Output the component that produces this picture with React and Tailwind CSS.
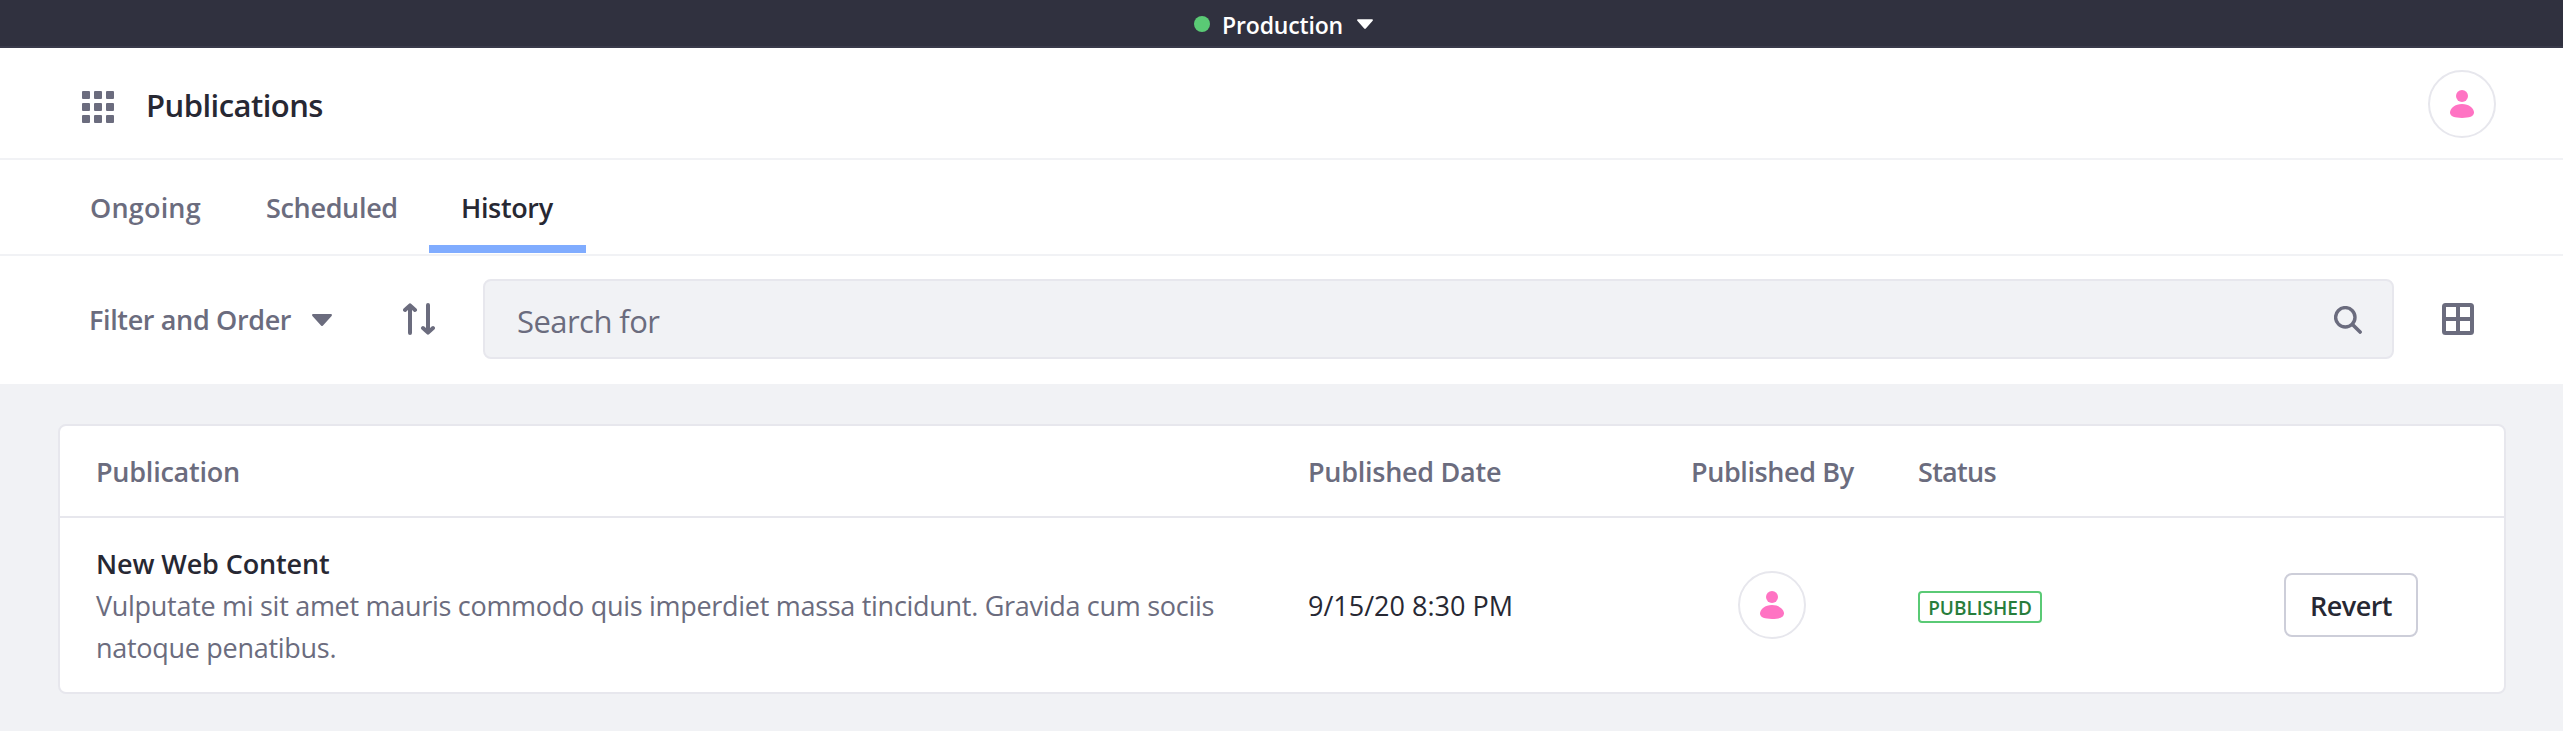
import React from 'react';

function Caret({ className }) {
  return (
    <svg viewBox="0 0 20 12" className={className} fill="currentColor" aria-hidden="true">
      <path d="M1.2 0h17.6c1 0 1.5 1.1.8 1.9L11 11.5a1.3 1.3 0 0 1-2 0L.4 1.9C-.3 1.1.2 0 1.2 0z" />
    </svg>
  );
}

function AppsIcon({ className }) {
  const steps = [0, 12, 24];
  return (
    <svg viewBox="0 0 32 32" className={className} fill="currentColor" aria-hidden="true">
      {steps.map((y) => steps.map((x) => <rect key={`${x}-${y}`} x={x} y={y} width="8" height="8" rx="1" />))}
    </svg>
  );
}

function SortIcon({ className }) {
  return (
    <svg
      viewBox="0 0 32 32"
      className={className}
      fill="none"
      stroke="currentColor"
      strokeWidth="4"
      strokeLinecap="round"
      strokeLinejoin="round"
      aria-hidden="true"
    >
      <path d="M7 30V3M2 7l5-4.6L12 7" />
      <path d="M25 2v27M20 25l5 4.6L30 25" />
    </svg>
  );
}

function SearchIcon({ className }) {
  return (
    <svg viewBox="0 0 28 28" className={className} fill="none" stroke="currentColor" aria-hidden="true">
      <circle cx="11.3" cy="11.3" r="9.7" strokeWidth="3.4" />
      <path d="M18.5 18.5l7.6 7.6" strokeWidth="3.6" strokeLinecap="round" />
    </svg>
  );
}

function TableIcon({ className }) {
  return (
    <svg viewBox="0 0 32 32" className={className} fill="none" stroke="currentColor" strokeWidth="4" aria-hidden="true">
      <rect x="2" y="2" width="28" height="28" rx="1.5" />
      <path d="M16 2v28M2 16h28" />
    </svg>
  );
}

function Avatar({ className = '' }) {
  return (
    <span
      className={`flex size-[68px] shrink-0 items-center justify-center rounded-full border-2 border-[#e7e7ed] bg-white text-[#ff73c3] ${className}`}
    >
      <svg viewBox="0 0 24 28" className="h-7 w-6" fill="currentColor" aria-hidden="true">
        <circle cx="12" cy="6" r="6" />
        <path d="M12 14c7 0 12 4.2 12 8.6C24 26.4 19.2 28 12 28S0 26.4 0 22.6C0 18.2 5 14 12 14z" />
      </svg>
    </span>
  );
}

const columns = 'grid grid-cols-[1212px_383px_227px_366px_134px] items-center pl-9';

export default function App() {
  return (
    <div className="flex min-h-[731px] w-[2563px] flex-col bg-[#f1f2f5] font-['Open_Sans','Noto_Sans',sans-serif] text-[27px] leading-[42px] text-[#272833]">
      <div className="flex h-12 items-center border-b-2 border-[#393a4a] bg-[#30313f] pt-0.5 pl-[1194px] text-white">
        <span className="size-4 rounded-full bg-[#5aca75]" />
        <span className="ml-3 w-[121px] pt-0.5 text-[23px] leading-[34px] font-semibold tracking-[-0.16px]">Production</span>
        <Caret className="ml-[14px] h-[10px] w-4" />
      </div>

      <header className="flex h-28 items-center border-b-2 border-[#f1f2f5] bg-white pr-[67px] pl-[82px]">
        <AppsIcon className="mt-2 size-8 text-[#6b6c7e]" />
        <h1 className="ml-8 pt-1 text-[31px] font-semibold tracking-[-0.54px]">Publications</h1>
        <Avatar className="mt-0.5 ml-auto" />
      </header>

      <nav className="flex h-24 items-start border-b-2 border-[#f1f2f5] bg-white pl-[58px] font-semibold text-[#6b6c7e]">
        <a className="flex h-[93px] w-44 items-center pt-0.5 pl-8 tracking-[0.2px]">Ongoing</a>
        <a className="flex h-[93px] w-[195px] items-center pt-0.5 pl-8 tracking-[-0.33px]">Scheduled</a>
        <a className="flex h-[93px] w-[157px] items-center border-b-8 border-[#80acff] pt-2.5 pl-8 tracking-[-0.35px] text-[#272833]">
          History
        </a>
      </nav>

      <div className="flex h-32 bg-white pt-[23px] pb-[25px] pl-[89px] text-[#6b6c7e]">
        <div className="flex flex-1 items-center">
          <span className="w-[202px] pt-0.5 font-semibold tracking-[-0.36px] whitespace-nowrap">Filter and Order</span>
          <Caret className="mt-0.5 ml-[21px] h-3 w-5" />
          <SortIcon className="ml-[71px] size-8" />
          <div className="ml-12 flex h-20 w-[1911px] items-center rounded-lg border-2 border-[#e7e7ed] bg-[#f1f2f5] pr-[30px] pl-8">
            <span className="pt-1 text-[31px] tracking-[-0.55px]">Search for</span>
            <SearchIcon className="mt-0.5 ml-auto size-7" />
          </div>
          <TableIcon className="ml-12 size-8" />
        </div>
      </div>

      <main className="mt-10 mr-[57px] ml-[58px] rounded-lg border-2 border-[#e7e7ed] bg-white">
        <div className={`${columns} h-[92px] border-b-2 border-[#e7e7ed] pt-px font-semibold text-[#6b6c7e]`}>
          <span className="tracking-[-0.24px]">Publication</span>
          <span className="tracking-[-0.27px]">Published Date</span>
          <span className="tracking-[-0.4px]">Published By</span>
          <span className="tracking-[-0.7px]">Status</span>
        </div>
        <div className={`${columns} h-[174px]`}>
          <div className="pt-0.5">
            <p className="font-semibold tracking-[-0.12px]">New Web Content</p>
            <p className="w-[1160px] tracking-[-0.29px] text-[#6b6c7e]">
              Vulputate mi sit amet mauris commodo quis imperdiet massa tincidunt. Gravida cum sociis natoque penatibus.
            </p>
          </div>
          <span className="pt-0.5">9/15/20 8:30 PM</span>
          <span className="flex w-[162px] justify-center">
            <Avatar />
          </span>
          <span className="mt-1 flex h-8 w-[124px] items-center justify-center rounded border-2 border-[#5aca75] bg-white pt-px text-[19px] leading-7 font-semibold text-[#287d3c]">
            PUBLISHED
          </span>
          <button className="flex h-16 w-[134px] items-center justify-center rounded-lg border-2 border-[#cdced9] bg-white pt-px font-semibold tracking-[-0.55px]">
            Revert
          </button>
        </div>
      </main>
    </div>
  );
}
